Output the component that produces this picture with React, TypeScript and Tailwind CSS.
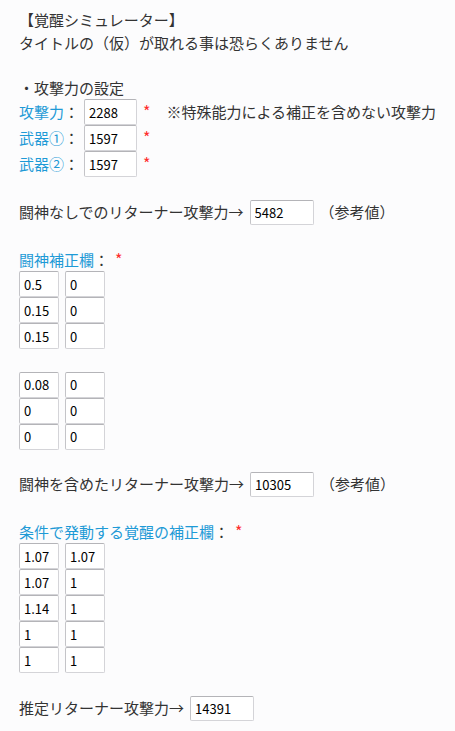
import React from "react";

const font = { fontFamily: '"Noto Sans CJK JP", "Noto Sans", sans-serif' };

function Box({ v, w }: { v: string; w: string }) {
  return (
    <input
      readOnly
      value={v}
      className={`${w} h-[26px] shrink-0 border border-[#d4d4d8] border-t-[#b4b4b8] border-l-[#c4c4c8] rounded-[2px] bg-white pl-[4px] text-[13px] text-black outline-none`}
      style={font}
    />
  );
}

function Star() {
  return <span className="text-[16px] text-[#ff2d2d]">*</span>;
}

function Grid({ rows }: { rows: [string, string][] }) {
  return (
    <div className="flex flex-col">
      {rows.map((r, i) => (
        <div key={i} className="flex gap-[6px] h-[26px]">
          <Box v={r[0]} w="w-[40px]" />
          <Box v={r[1]} w="w-[40px]" />
        </div>
      ))}
    </div>
  );
}

function Blank() {
  return <div className="h-[22.5px]" />;
}

export default function App() {
  return (
    <div
      className="min-h-[731px] w-[455px] bg-[#fcfcfd] pl-[19px] pt-[9px] text-[15px] leading-[22.5px] text-[#333333]"
      style={font}
    >
      <div>【覚醒シミュレーター】</div>
      <div>タイトルの（仮）が取れる事は恐らくありません</div>
      <Blank />
      <div>・攻撃力の設定</div>
      {[
        ["攻撃力", "2288", true],
        ["武器①", "1597", false],
        ["武器②", "1597", false],
      ].map(([label, v, note], i) => (
        <div key={i} className="flex items-center h-[26px]">
          <span className="w-[65px] shrink-0">
            <span className="text-[#1e9ad6]">{label as string}</span>：
          </span>
          <Box v={v as string} w="w-[53px]" />
          <span className="ml-[6px]">
            <Star />
          </span>
          {note ? <span className="ml-[16px]">※特殊能力による補正を含めない攻撃力</span> : null}
        </div>
      ))}
      <div className="h-[23px]" />
      <div className="flex items-center h-[25px]">
        <span>闘神なしでのリターナー攻撃力→</span>
        <span className="ml-[6px] flex"><Box v="5482" w="w-[64px] !h-[25px]" /></span>
        <span className="ml-[6px]">（参考値）</span>
      </div>
      <Blank />
      <div>
        <span className="text-[#1e9ad6]">闘神補正欄</span>：<span className="ml-[6px]"><Star /></span>
      </div>
      <Grid rows={[["0.5", "0"], ["0.15", "0"], ["0.15", "0"]]} />
      <Blank />
      <Grid rows={[["0.08", "0"], ["0", "0"], ["0", "0"]]} />
      <Blank />
      <div className="flex items-center h-[25px]">
        <span>闘神を含めたリターナー攻撃力→</span>
        <span className="ml-[6px] flex"><Box v="10305" w="w-[64px] !h-[25px]" /></span>
        <span className="ml-[6px]">（参考値）</span>
      </div>
      <Blank />
      <div>
        <span className="text-[#1e9ad6]">条件で発動する覚醒の補正欄</span>：<span className="ml-[6px]"><Star /></span>
      </div>
      <Grid
        rows={[
          ["1.07", "1.07"],
          ["1.07", "1"],
          ["1.14", "1"],
          ["1", "1"],
          ["1", "1"],
        ]}
      />
      <div className="h-[23px]" />
      <div className="flex items-center h-[25px]">
        <span>推定リターナー攻撃力→</span>
        <span className="ml-[6px] flex"><Box v="14391" w="w-[64px] !h-[25px]" /></span>
      </div>
    </div>
  );
}
